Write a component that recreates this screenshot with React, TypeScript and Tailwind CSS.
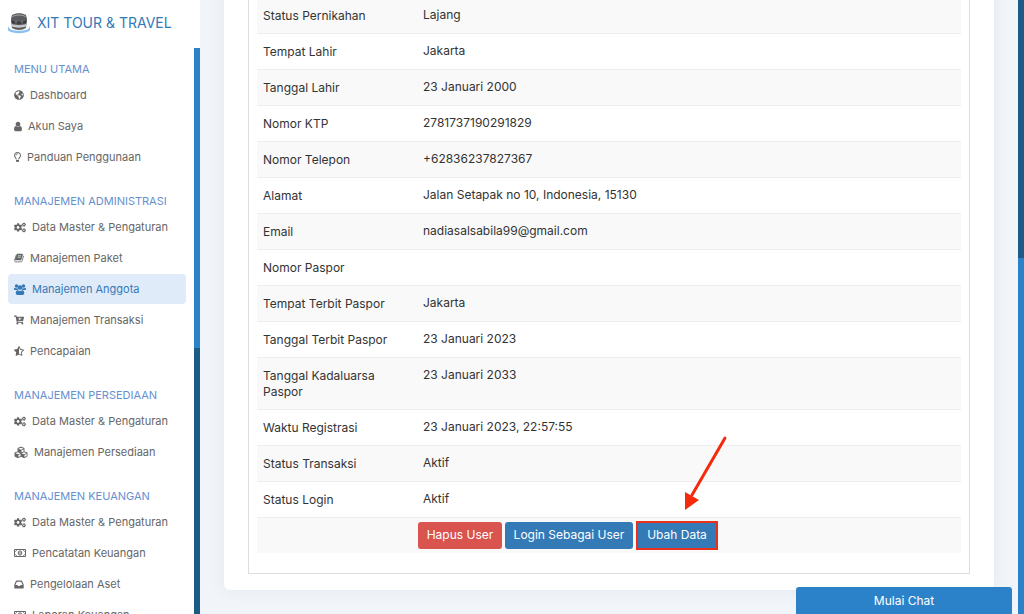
import type { ReactNode } from "react";
import { FaCartPlus, FaCogs, FaCubes, FaGlobeAmericas, FaRegLightbulb, FaStarHalfAlt } from "react-icons/fa";

type Item = { label: string; icon: ReactNode; active?: boolean };

function UserIcon() {
  return (
    <svg viewBox="0 0 1280 1792" fill="currentColor" className="h-[11px] w-2 shrink-0" aria-hidden="true">
      <path d="M1280 1399q0 109-62.5 187t-150.5 78h-854q-88 0-150.5-78t-62.5-187q0-85 8.5-160.5t31.5-152 58.5-131 94-89 134.5-34.5q131 128 313 128t313-128q76 0 134.5 34.5t94 89 58.5 131 31.5 152 8.5 160.5zm-256-887q0 159-112.5 271.5t-271.5 112.5-271.5-112.5-112.5-271.5 112.5-271.5 271.5-112.5 271.5 112.5 112.5 271.5z" />
    </svg>
  );
}

function UsersIcon() {
  return (
    <svg viewBox="0 0 24 22" fill="currentColor" className="h-[11px] w-3 shrink-0" aria-hidden="true">
      <circle cx="5" cy="4" r="3.4" />
      <circle cx="19" cy="4" r="3.4" />
      <circle cx="12" cy="7" r="4.6" />
      <path d="M2 7.5c2 1.6 3.5 1.6 5 .5.2 1.7.8 2.9 1.8 4H2.4C.8 12 0 11.2 0 10c0-1.4.8-2.5 2-2.5z" />
      <path d="M22 7.5c-2 1.6-3.5 1.6-5 .5-.2 1.7-.8 2.9-1.8 4h6.4c1.6 0 2.4-.8 2.4-2 0-1.4-.8-2.5-2-2.5z" />
      <path d="M7.5 12.5c3 2 6 2 9 0 2.5 0 4 2.500 4 6 0 2-1.500 3.500-3.500 3.500H7c-2 0-3.500-1.500-3.500-3.500 0-3.500 1.500-6 4-6z" />
    </svg>
  );
}

function BookIcon() {
  return (
    <svg viewBox="0 0 20 18" fill="none" stroke="currentColor" className="h-[10px] w-[10px] shrink-0" aria-hidden="true">
      <path d="M6 1h10c1 0 1.6.8 1.3 1.8L14 13H2z" fill="currentColor" />
      <path d="M4.5 3L1.2 13.5c-.6 2 .4 3.200 2 3.200H14c1 0 1.700-.5 2-1.500L19.300 4.500" strokeWidth="1.600" />
      <path d="M8 4.500h6M7.200 7.500h6" stroke="#fff" strokeWidth="1.300" />
    </svg>
  );
}

function MoneyIcon() {
  return (
    <svg viewBox="0 0 24 16" fill="none" stroke="currentColor" className="h-2 w-3 shrink-0" aria-hidden="true">
      <path d="M1 1h22v14H1z" strokeWidth="2" />
      <path d="M2 5c2 0 3-1 3-3M22 5c-2 0-3-1-3-3M2 11c2 0 3 1 3 3M22 11c-2 0-3 1-3 3" strokeWidth="1.500" />
      <ellipse cx="12" cy="8" rx="3.600" ry="4.400" strokeWidth="2" />
      <path d="M12 5.500v5" strokeWidth="2" />
    </svg>
  );
}

function InboxIcon() {
  return (
    <svg viewBox="0 0 1536 1792" fill="currentColor" className="h-[11px] w-[10px] shrink-0" aria-hidden="true">
      <path d="M1023 960h316q-1-3-2.500-8t-2.500-8l-212-496h-708l-212 496q-1 2-2.500 8t-2.500 8h316l95 192h320zm513 30v482q0 26-19 45t-45 19h-1408q-26 0-45-19t-19-45v-482q0-62 25-123l238-552q10-25 36.500-42t52.500-17h832q26 0 52.500 17t36.500 42l238 552q25 61 25 123z" />
    </svg>
  );
}

const MENU: { title: string; items: Item[] }[] = [
  {
    title: "MENU UTAMA",
    items: [
      { label: "Dashboard", icon: <FaGlobeAmericas className="size-[10px]" /> },
      { label: "Akun Saya", icon: <UserIcon /> },
      { label: "Panduan Penggunaan", icon: <FaRegLightbulb className="h-[10px] w-[7px]" /> },
    ],
  },
  {
    title: "MANAJEMEN ADMINISTRASI",
    items: [
      { label: "Data Master & Pengaturan", icon: <FaCogs className="h-[11px] w-[12px]" /> },
      { label: "Manajemen Paket", icon: <BookIcon /> },
      { label: "Manajemen Anggota", icon: <UsersIcon />, active: true },
      { label: "Manajemen Transaksi", icon: <FaCartPlus className="h-[10px] w-[10px]" /> },
      { label: "Pencapaian", icon: <FaStarHalfAlt className="h-[10px] w-[10px]" /> },
    ],
  },
  {
    title: "MANAJEMEN PERSEDIAAN",
    items: [
      { label: "Data Master & Pengaturan", icon: <FaCogs className="h-[11px] w-[12px]" /> },
      { label: "Manajemen Persediaan", icon: <FaCubes className="h-[13px] w-[14px]" /> },
    ],
  },
  {
    title: "MANAJEMEN KEUANGAN",
    items: [
      { label: "Data Master & Pengaturan", icon: <FaCogs className="h-[11px] w-[12px]" /> },
      { label: "Pencatatan Keuangan", icon: <MoneyIcon /> },
      { label: "Pengelolaan Aset", icon: <InboxIcon /> },
      { label: "Laporan Keuangan", icon: <MoneyIcon /> },
    ],
  },
];

const ROWS = [
  ["Status Pernikahan", "Lajang"],
  ["Tempat Lahir", "Jakarta"],
  ["Tanggal Lahir", "23 Januari 2000"],
  ["Nomor KTP", "2781737190291829"],
  ["Nomor Telepon", "+62836237827367"],
  ["Alamat", "Jalan Setapak no 10, Indonesia, 15130"],
  ["Email", "nadiasalsabila99@gmail.com"],
  ["Nomor Paspor", ""],
  ["Tempat Terbit Paspor", "Jakarta"],
  ["Tanggal Terbit Paspor", "23 Januari 2023"],
  ["Tanggal Kadaluarsa Paspor", "23 Januari 2033"],
  ["Waktu Registrasi", "23 Januari 2023, 22:57:55"],
  ["Status Transaksi", "Aktif"],
  ["Status Login", "Aktif"],
];

function Logo() {
  return (
    <svg viewBox="0 0 24 22" className="h-[22px] w-6 shrink-0" aria-hidden="true">
      <path d="M1 14v4.5c5 3.5 17 3.5 22 0V14c-1 2.5-2 3.5-4 4-4 1-10 1-14 0-2-.5-3-1.500-4-4z" fill="#8cc0ee" />
      <path d="M5 3c4-2.500 10-2.500 14 0l1 4-1 9c-4 2.500-10 2.500-14 0L4 7z" fill="#5b5d60" />
      <path d="M5.500 4.500c4-2 9-2 13 0" stroke="#a9abad" fill="none" />
      <path d="M4.500 8c4 2 11 2 15 0v3c-4 1.500-11 1.500-15 0z" fill="#3c3e41" />
      <path d="M5 12c4 1.500 10 1.500 14 0v2.500c-4 1.500-10 1.500-14 0z" fill="#c5c8cb" />
      <path d="M9 8.500v3M15 8.500v3" stroke="#8d8f92" />
    </svg>
  );
}

function Sidebar() {
  return (
    <aside className="flex w-[200px] shrink-0 flex-col bg-white">
      <a href="#" className="flex h-12 shrink-0 items-center gap-[6px] pb-[2px] pl-[7px] text-[14px] text-[#337ab7]">
        <Logo />
        XIT TOUR &amp; TRAVEL
      </a>
      <div className="flex min-h-0 flex-1">
        <nav className="flex min-w-0 flex-1 flex-col gap-[18px] overflow-hidden pt-[10px] pr-2 pl-2">
          {MENU.map((group) => (
            <section key={group.title} className="shrink-0">
              <h2 className="h-[22px] pl-[6px] text-[11px] leading-[22px] whitespace-nowrap text-[#6690d0]">{group.title}</h2>
              <ul className="space-y-px">
                {group.items.map((item) => (
                  <li key={item.label}>
                    <a
                      href="#"
                      className={`flex h-[30px] items-center gap-[6px] rounded pl-[6px] text-[11px] whitespace-nowrap ${item.active ? "bg-[#e0ebf9] text-[#337ab7]" : "text-[#666]"}`}
                    >
                      {item.icon}
                      {item.label}
                    </a>
                  </li>
                ))}
              </ul>
            </section>
          ))}
        </nav>
        <div className="w-[6px] shrink-0 bg-[#1d5a85]">
          <div className="h-[53%] bg-[#2c82c9]" />
        </div>
      </div>
    </aside>
  );
}

export default function App() {
  return (
    <div className="flex h-screen overflow-hidden bg-[#f1f5f9] font-[Inter,sans-serif] text-[12px] leading-4 text-[#333]">
      <Sidebar />
      <main className="flex min-w-0 flex-1 flex-col justify-end overflow-hidden px-6 pb-6">
        <div className="shrink-0 rounded-md bg-white px-6 py-4 shadow-[0_0_16px_rgba(60,90,130,0.08)]">
          <div className="border border-[#ddd] px-2 pt-2 pb-5">
            <table className="w-full table-fixed border-collapse">
              <colgroup>
                <col className="w-[160px]" />
                <col />
              </colgroup>
              <tbody>
                {ROWS.map(([label, value]) => (
                  <tr key={label} className="border-t border-[#eee] align-top odd:bg-[#f9f9f9]">
                    <th scope="row" className="px-[6px] pt-[10px] pb-[9px] text-left font-normal">{label}</th>
                    <td className="px-[6px] pt-[9px] pb-[10px]">{value}</td>
                  </tr>
                ))}
                <tr className="border-t border-[#eee] bg-[#f9f9f9]">
                  <td />
                  <td className="h-9 p-0">
                    <div className="flex items-center gap-[3px] pl-px text-white">
                      <button type="button" className="h-[27px] w-[84px] rounded-[3px] bg-[#d9534f]">Hapus User</button>
                      <button type="button" className="h-[27px] w-[128px] rounded-[3px] bg-[#337ab7]">Login Sebagai User</button>
                      <div className="relative">
                        <button type="button" className="h-[29px] w-[82px] border-2 border-[#e8301c] bg-[#337ab7]">Ubah Data</button>
                        <svg viewBox="0 0 44 76" className="absolute bottom-[39px] left-[48px] h-[76px] w-11" aria-hidden="true">
                          <path d="M41 3L8 60" stroke="#f5290c" strokeWidth="3" strokeLinecap="round" />
                          <path d="M1 75V57l14 8z" fill="#f5290c" />
                        </svg>
                      </div>
                    </div>
                  </td>
                </tr>
              </tbody>
            </table>
          </div>
        </div>
      </main>
      <div className="flex w-[6px] shrink-0 flex-col justify-end bg-[#1d5a85]">
        <div className="h-[58%] bg-[#2c82c9]" />
      </div>
      <button type="button" className="fixed right-3 bottom-0 h-[27px] w-[216px] rounded-t-[3px] bg-[#2c82c9] text-white">
        Mulai Chat
      </button>
    </div>
  );
}
